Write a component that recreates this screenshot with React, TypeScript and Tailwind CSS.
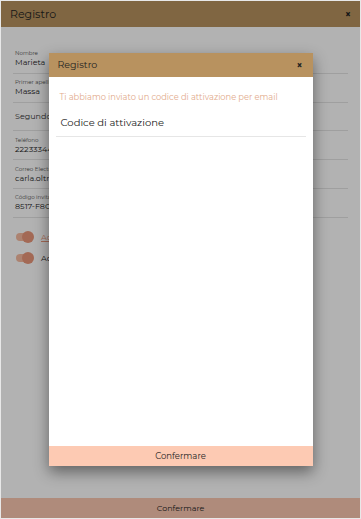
import React from 'react';

type Field = {
  label?: string;
  value: string;
};

const fields: Field[] = [
  { label: 'Nombre', value: 'Marieta' },
  { label: 'Primer apellido', value: 'Massa' },
  { value: 'Segundo apellido' },
  { label: 'Teléfono', value: '222333444555' },
  { label: 'Correo Electrónico', value: 'carla.oltra@gmail.com' },
  { label: 'Código invitación', value: '8517-F8C5-22AB' },
];

const Toggle: React.FC = () => (
  <div className="relative w-[17px] h-[8px] rounded-full bg-[#f6bba1]">
    <div className="absolute right-[-1px] top-[-2px] w-[12px] h-[12px] rounded-full bg-[#ea977a]" />
  </div>
);

const RegisterPage: React.FC = () => (
  <div className="flex flex-col h-full bg-white">
    <div className="h-[26px] flex items-center justify-between px-[9px] bg-[#b8935f] text-[#222] text-[11px]">
      <span>Registro</span>
      <span className="font-bold text-[10px]">×</span>
    </div>
    <div className="flex-1 pt-[18px] px-[12px]">
      {fields.map((f, i) => (
        <div key={i} className="h-[28.8px] flex flex-col justify-center border-b border-[#e4e4e4] px-[2px]">
          {f.label && <span className="text-[5.5px] text-[#555] leading-[8px]">{f.label}</span>}
          <span className={`text-[8px] leading-[11px] ${f.label ? 'text-[#222]' : 'text-[#333]'}`}>{f.value}</span>
        </div>
      ))}
      <div className="flex flex-col pt-[9px] pl-[3px]">
        <div className="h-[21px] flex items-center gap-[8px]">
          <Toggle />
          <span className="text-[8px] leading-[10px] text-[#ea977a] underline">Acepto los términos y condiciones</span>
        </div>
        <div className="h-[21px] flex items-center gap-[8px]">
          <Toggle />
          <span className="text-[8px] leading-[10px] text-[#222]">Acepto recibir comunicaciones</span>
        </div>
      </div>
    </div>
    <button className="h-[20px] bg-[#fbc8b1] text-[#222] text-[8px]">Confermare</button>
  </div>
);

const ActivationModal: React.FC = () => (
  <div className="w-[264px] h-[413px] flex flex-col bg-white shadow-[0_6px_14px_rgba(0,0,0,0.45)]">
    <div className="h-[24px] flex items-center justify-between pl-[9px] pr-[10px] bg-[#b8925f] text-[#222] text-[9.5px]">
      <span>Registro</span>
      <span className="font-bold text-[10px]">×</span>
    </div>
    <div className="flex-1 px-[7px] pt-[14px]">
      <p className="px-[4px] text-[8.3px] leading-[12px] text-[#e2aa8b]">Ti abbiamo inviato un codice di attivazione per email</p>
      <div className="mt-[13px] pb-[7px] px-[5px] border-b border-[#e6e6e6] text-[10px] leading-[13px] text-[#222]">
        Codice di attivazione
      </div>
    </div>
    <button className="h-[20px] bg-[#fdcab3] text-[#222] text-[8.5px]">Confermare</button>
  </div>
);

export default function App() {
  return (
    <div className="w-[361px] h-[519px] relative overflow-hidden border border-[#e8e8e8] font-['Montserrat','DejaVu_Sans',sans-serif]">
      <RegisterPage />
      <div className="absolute inset-0 bg-black/30 flex items-center justify-center">
        <ActivationModal />
      </div>
    </div>
  );
}
